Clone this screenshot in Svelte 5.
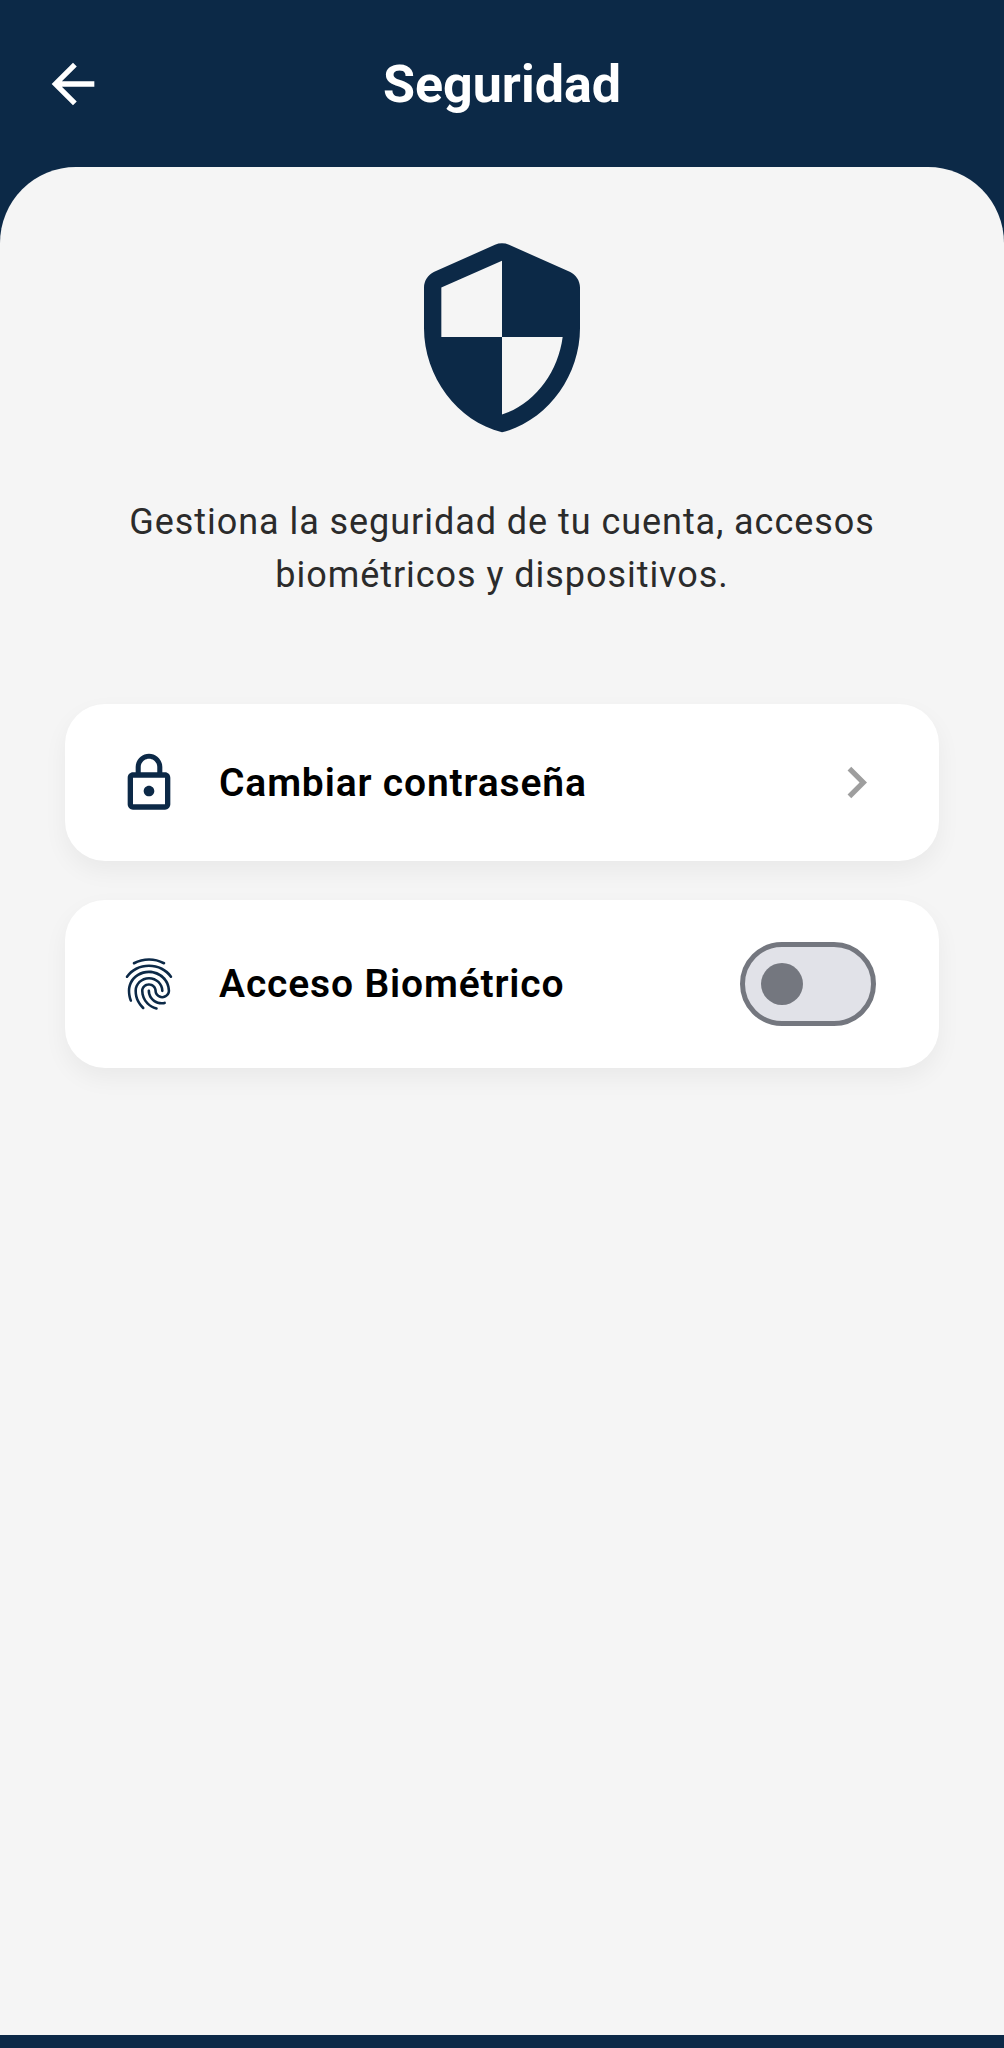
<script>
let biometric = $state(false)

function toggle_biometric() {
  biometric = !biometric
}
</script>

<div class="page">
  <header class="top">
    <button class="back" aria-label="Volver">
      <svg width="64" height="64" viewBox="0 0 24 24"><path d="M20 11H7.83l5.59-5.59L12 4l-8 8 8 8 1.41-1.41L7.83 13H20v-2z" /></svg>
    </button>
    <h1>Seguridad</h1>
  </header>

  <main class="sheet">
    <svg class="shield" width="208" height="208" viewBox="0 0 24 24">
      <path d="M11.19 1.36l-7 3.11C3.47 4.79 3 5.51 3 6.3V11c0 5.55 3.84 10.74 9 12 5.16-1.26 9-6.45 9-12V6.3c0-.79-.47-1.51-1.19-1.83l-7-3.11c-.52-.23-1.1-.23-1.62 0zM12 11.99h7c-.53 4.12-3.28 7.79-7 8.94V12H5V6.3l7-3.11v8.8z" />
    </svg>

    <p class="intro">Gestiona la seguridad de tu cuenta, accesos<br />biométricos y dispositivos.</p>

    <div class="option password">
      <svg class="icon" width="64" height="64" viewBox="0 0 24 24">
        <path d="M12 17c1.1 0 2-.9 2-2s-.9-2-2-2-2 .9-2 2 .9 2 2 2zm6-9h-1V6c0-2.76-2.24-5-5-5S7 3.24 7 6v2H6c-1.1 0-2 .9-2 2v10c0 1.1.9 2 2 2h12c1.1 0 2-.9 2-2V10c0-1.1-.9-2-2-2zM8.9 6c0-1.71 1.39-3.1 3.1-3.1s3.1 1.39 3.1 3.1v2H8.9V6zM18 20H6V10h12v10z" />
      </svg>
      <span class="label">Cambiar contraseña</span>
      <svg class="chevron" width="63" height="63" viewBox="0 0 24 24"><path d="M10 6L8.59 7.41 13.17 12l-4.58 4.59L10 18l6-6z" /></svg>
    </div>

    <div class="option bio">
      <svg class="icon" width="62" height="62" viewBox="0 0 24 24">
        <path d="M17.81 4.47c-.08 0-.16-.02-.23-.06C15.66 3.42 14 3 12.01 3c-1.98 0-3.86.47-5.57 1.41-.24.13-.54.04-.68-.2-.13-.24-.04-.55.2-.68C7.82 2.52 9.86 2 12.01 2c2.13 0 3.99.47 6.03 1.52.25.13.34.43.21.67-.09.18-.26.28-.44.28zM3.5 9.72c-.1 0-.2-.03-.29-.09-.23-.16-.28-.47-.12-.7.99-1.4 2.25-2.5 3.75-3.27C9.98 4.04 14 4.03 17.15 5.65c1.5.77 2.76 1.86 3.75 3.25.16.22.11.54-.12.7-.23.16-.54.11-.7-.12-.9-1.26-2.04-2.25-3.39-2.94-2.87-1.47-6.54-1.47-9.4.01-1.36.7-2.5 1.7-3.4 2.96-.08.14-.23.21-.39.21zm6.25 12.07c-.13 0-.26-.05-.35-.15-.87-.87-1.34-1.43-2.01-2.64-.69-1.23-1.05-2.73-1.05-4.34 0-2.97 2.54-5.39 5.66-5.39s5.66 2.42 5.66 5.39c0 .28-.22.5-.5.5s-.5-.22-.5-.5c0-2.42-2.09-4.39-4.66-4.39-2.57 0-4.66 1.97-4.66 4.39 0 1.44.32 2.77.93 3.85.64 1.15 1.08 1.64 1.85 2.42.19.2.19.51 0 .71-.11.1-.24.15-.37.15zm7.17-1.85c-1.19 0-2.24-.3-3.1-.89-1.49-1.01-2.38-2.65-2.38-4.39 0-.28.22-.5.5-.5s.5.22.5.5c0 1.41.72 2.74 1.94 3.56.71.48 1.54.71 2.54.71.24 0 .64-.03 1.04-.1.27-.05.53.13.58.41.05.27-.13.53-.41.58-.57.11-1.07.12-1.21.12zM14.91 22c-.04 0-.09-.01-.13-.02-1.59-.44-2.63-1.03-3.72-2.1-1.4-1.39-2.17-3.24-2.17-5.22 0-1.62 1.38-2.94 3.08-2.94 1.7 0 3.08 1.32 3.08 2.94 0 1.07.93 1.94 2.08 1.94s2.08-.87 2.08-1.94c0-3.77-3.25-6.83-7.25-6.83-2.84 0-5.44 1.58-6.61 4.03-.39.81-.59 1.76-.59 2.8 0 .78.07 2.01.67 3.61.1.26-.03.55-.29.64-.26.1-.55-.04-.64-.29-.49-1.31-.73-2.61-.73-3.96 0-1.2.23-2.29.68-3.24 1.33-2.79 4.28-4.6 7.51-4.6 4.55 0 8.25 3.51 8.25 7.83 0 1.62-1.38 2.94-3.08 2.94s-3.08-1.32-3.08-2.94c0-1.07-.93-1.94-2.08-1.94s-2.08.87-2.08 1.94c0 1.71.66 3.31 1.87 4.51.95.94 1.86 1.46 3.27 1.85.27.07.42.35.35.61-.05.23-.26.38-.47.38z" />
      </svg>
      <span class="label">Acceso Biométrico</span>
      <button class="switch" class:on={biometric} aria-label="Acceso Biométrico" onclick={toggle_biometric}>
        <span class="thumb"></span>
      </button>
    </div>
  </main>

  <div class="bottom"></div>
</div>

<style>
  :global(body) {
    background: #0c2947;
  }

  .page {
    display: flex;
    flex-direction: column;
    height: 2048px;
    background: #0c2947;
    font-family: Roboto, "Liberation Sans", sans-serif;
  }

  .top {
    display: flex;
    align-items: flex-start;
    justify-content: center;
    position: relative;
    height: 167px;
    flex: none;
  }

  .top h1 {
    margin: 53px 0 0;
    font-size: 52px;
    line-height: 64px;
    font-weight: 700;
    color: #fff;
  }

  .back {
    position: absolute;
    left: 41px;
    top: 52px;
    width: 64px;
    height: 64px;
    padding: 0;
    border: none;
    background: none;
  }

  .back svg {
    display: block;
    fill: #fff;
  }

  .sheet {
    flex: 1;
    display: flex;
    flex-direction: column;
    align-items: center;
    padding: 66px 65px 0;
    background: #f5f5f5;
    border-radius: 76px 76px 0 0;
  }

  .shield {
    flex: none;
    fill: #0c2947;
  }

  .intro {
    margin: 55px 0 0;
    font-size: 36px;
    line-height: 53px;
    letter-spacing: 0.95px;
    color: #2b2b2b;
    text-align: center;
  }

  .option {
    align-self: stretch;
    display: flex;
    align-items: center;
    background: #fff;
    border-radius: 40px;
    box-shadow: 0 10px 24px rgba(0, 0, 0, 0.05);
  }

  .password {
    height: 157px;
    margin-top: 102px;
  }

  .bio {
    height: 168px;
    margin-top: 39px;
  }

  .icon {
    flex: none;
    margin-left: 52px;
    fill: #0c2947;
  }

  .bio .icon {
    margin-left: 53px;
  }

  .label {
    flex: 1;
    margin-left: 38px;
    font-size: 39px;
    font-weight: 600;
    letter-spacing: 0.85px;
    color: #000;
  }

  .bio .label {
    margin-left: 39px;
  }

  .chevron {
    flex: none;
    margin-right: 51px;
    fill: #9e9e9e;
  }

  .switch {
    flex: none;
    display: flex;
    align-items: center;
    box-sizing: border-box;
    width: 136px;
    height: 84px;
    margin-right: 63px;
    padding: 0 0 0 16px;
    background: #e1e2e8;
    border: 5px solid #74777f;
    border-radius: 42px;
  }

  .thumb {
    display: block;
    width: 42px;
    height: 42px;
    border-radius: 50%;
    background: #74777f;
  }

  .switch.on {
    justify-content: flex-end;
    padding: 0 16px 0 0;
    background: #0c2947;
  }

  .switch.on .thumb {
    background: #fff;
  }

  .bottom {
    flex: none;
    height: 13px;
    background: #0c2947;
  }
</style>
